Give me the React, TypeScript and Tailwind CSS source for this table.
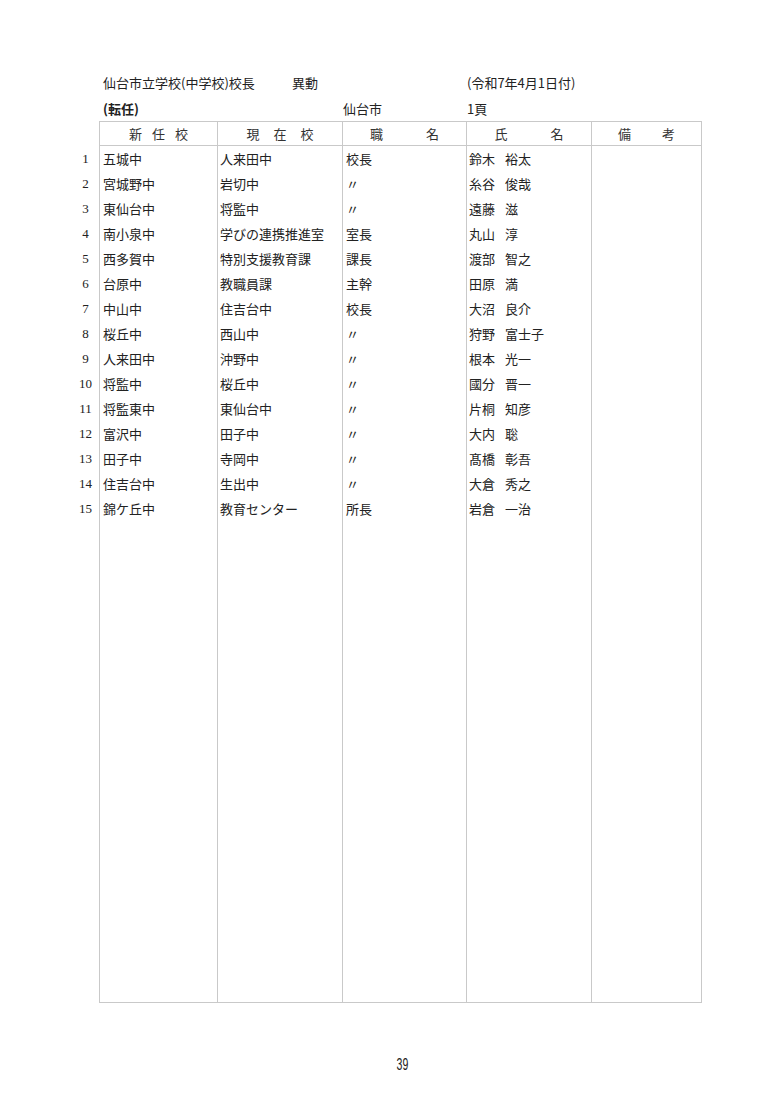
const rows = [
  ['五城中', '人来田中', '校長', '鈴木 裕太'],
  ['宮城野中', '岩切中', '〃', '糸谷 俊哉'],
  ['東仙台中', '将監中', '〃', '遠藤 滋'],
  ['南小泉中', '学びの連携推進室', '室長', '丸山 淳'],
  ['西多賀中', '特別支援教育課', '課長', '渡部 智之'],
  ['台原中', '教職員課', '主幹', '田原 満'],
  ['中山中', '住吉台中', '校長', '大沼 良介'],
  ['桜丘中', '西山中', '〃', '狩野 富士子'],
  ['人来田中', '沖野中', '〃', '根本 光一'],
  ['将監中', '桜丘中', '〃', '國分 晋一'],
  ['将監東中', '東仙台中', '〃', '片桐 知彦'],
  ['富沢中', '田子中', '〃', '大内 聡'],
  ['田子中', '寺岡中', '〃', '髙橋 彰吾'],
  ['住吉台中', '生出中', '〃', '大倉 秀之'],
  ['錦ケ丘中', '教育センター', '所長', '岩倉 一治'],
];

const grid = 'grid grid-cols-[29px_118px_125px_124px_125px_111px]';
const cell = 'border-l border-[#c9c9c9]';

function Name({ value }: { value: string }) {
  const [family, given] = value.split(' ');
  return (
    <span className="flex gap-[10px]">
      <span>{family}</span>
      <span>{given}</span>
    </span>
  );
}

export default function App() {
  return (
    <div className="w-[780px] h-[1103px] bg-white text-[#222] font-['Noto_Sans_CJK_JP',sans-serif] text-[13px] leading-[25px] pt-[73px] pl-[70px] flex flex-col">
      <div className={`${grid} h-[20px] leading-[20px] whitespace-nowrap`}>
        <div />
        <div className="col-span-2 flex pl-[4px]">
          <span className="w-[189px] shrink-0">仙台市立学校(中学校)校長</span>
          <span>異動</span>
        </div>
        <div />
        <div className="pl-[1px]">(令和7年4月1日付)</div>
      </div>
      <div className={`${grid} h-[20px] leading-[20px] mt-[6px] whitespace-nowrap`}>
        <div />
        <div className="col-span-2 pl-[4px] font-bold">(転任)</div>
        <div className="pl-[1px]">仙台市</div>
        <div className="pl-[1px]">1頁</div>
      </div>

      <div className={`${grid} mt-[2px] h-[25px] leading-[23px] text-[#333]`}>
        <div />
        <div className={`${cell} border-y flex justify-center gap-[10px]`}>
          <span>新</span><span>任</span><span>校</span>
        </div>
        <div className={`${cell} border-y flex justify-center gap-[14px]`}>
          <span>現</span><span>在</span><span>校</span>
        </div>
        <div className={`${cell} border-y flex justify-center gap-[43px]`}>
          <span>職</span><span>名</span>
        </div>
        <div className={`${cell} border-y flex justify-center gap-[43px]`}>
          <span>氏</span><span>名</span>
        </div>
        <div className={`${cell} border-y border-r flex justify-center gap-[31px]`}>
          <span>備</span><span>考</span>
        </div>
      </div>

      <div className="flex flex-col h-[857px]">
        {rows.map((r, i) => (
          <div key={i} className={`${grid} h-[25px]`}>
            <div className="text-center font-['Liberation_Serif',serif] text-[13px] pl-[2px]">{i + 1}</div>
            <div className={`${cell} pl-[3px] whitespace-nowrap`}>{r[0]}</div>
            <div className={`${cell} pl-[2px] whitespace-nowrap`}>{r[1]}</div>
            <div className={`${cell} pl-[3px] whitespace-nowrap`}>{r[2]}</div>
            <div className={`${cell} pl-[2px] whitespace-nowrap`}>
              <Name value={r[3]} />
            </div>
            <div className={`${cell} border-r`} />
          </div>
        ))}
        <div className={`${grid} flex-1`}>
          <div />
          <div className={`${cell} border-b`} />
          <div className={`${cell} border-b`} />
          <div className={`${cell} border-b`} />
          <div className={`${cell} border-b`} />
          <div className={`${cell} border-b border-r`} />
        </div>
      </div>

      <div className="w-[664px] flex justify-center mt-[52px]">
        <span className="font-['Liberation_Sans',sans-serif] text-[17px] leading-[20px] scale-x-[0.62]">39</span>
      </div>
    </div>
  );
}
